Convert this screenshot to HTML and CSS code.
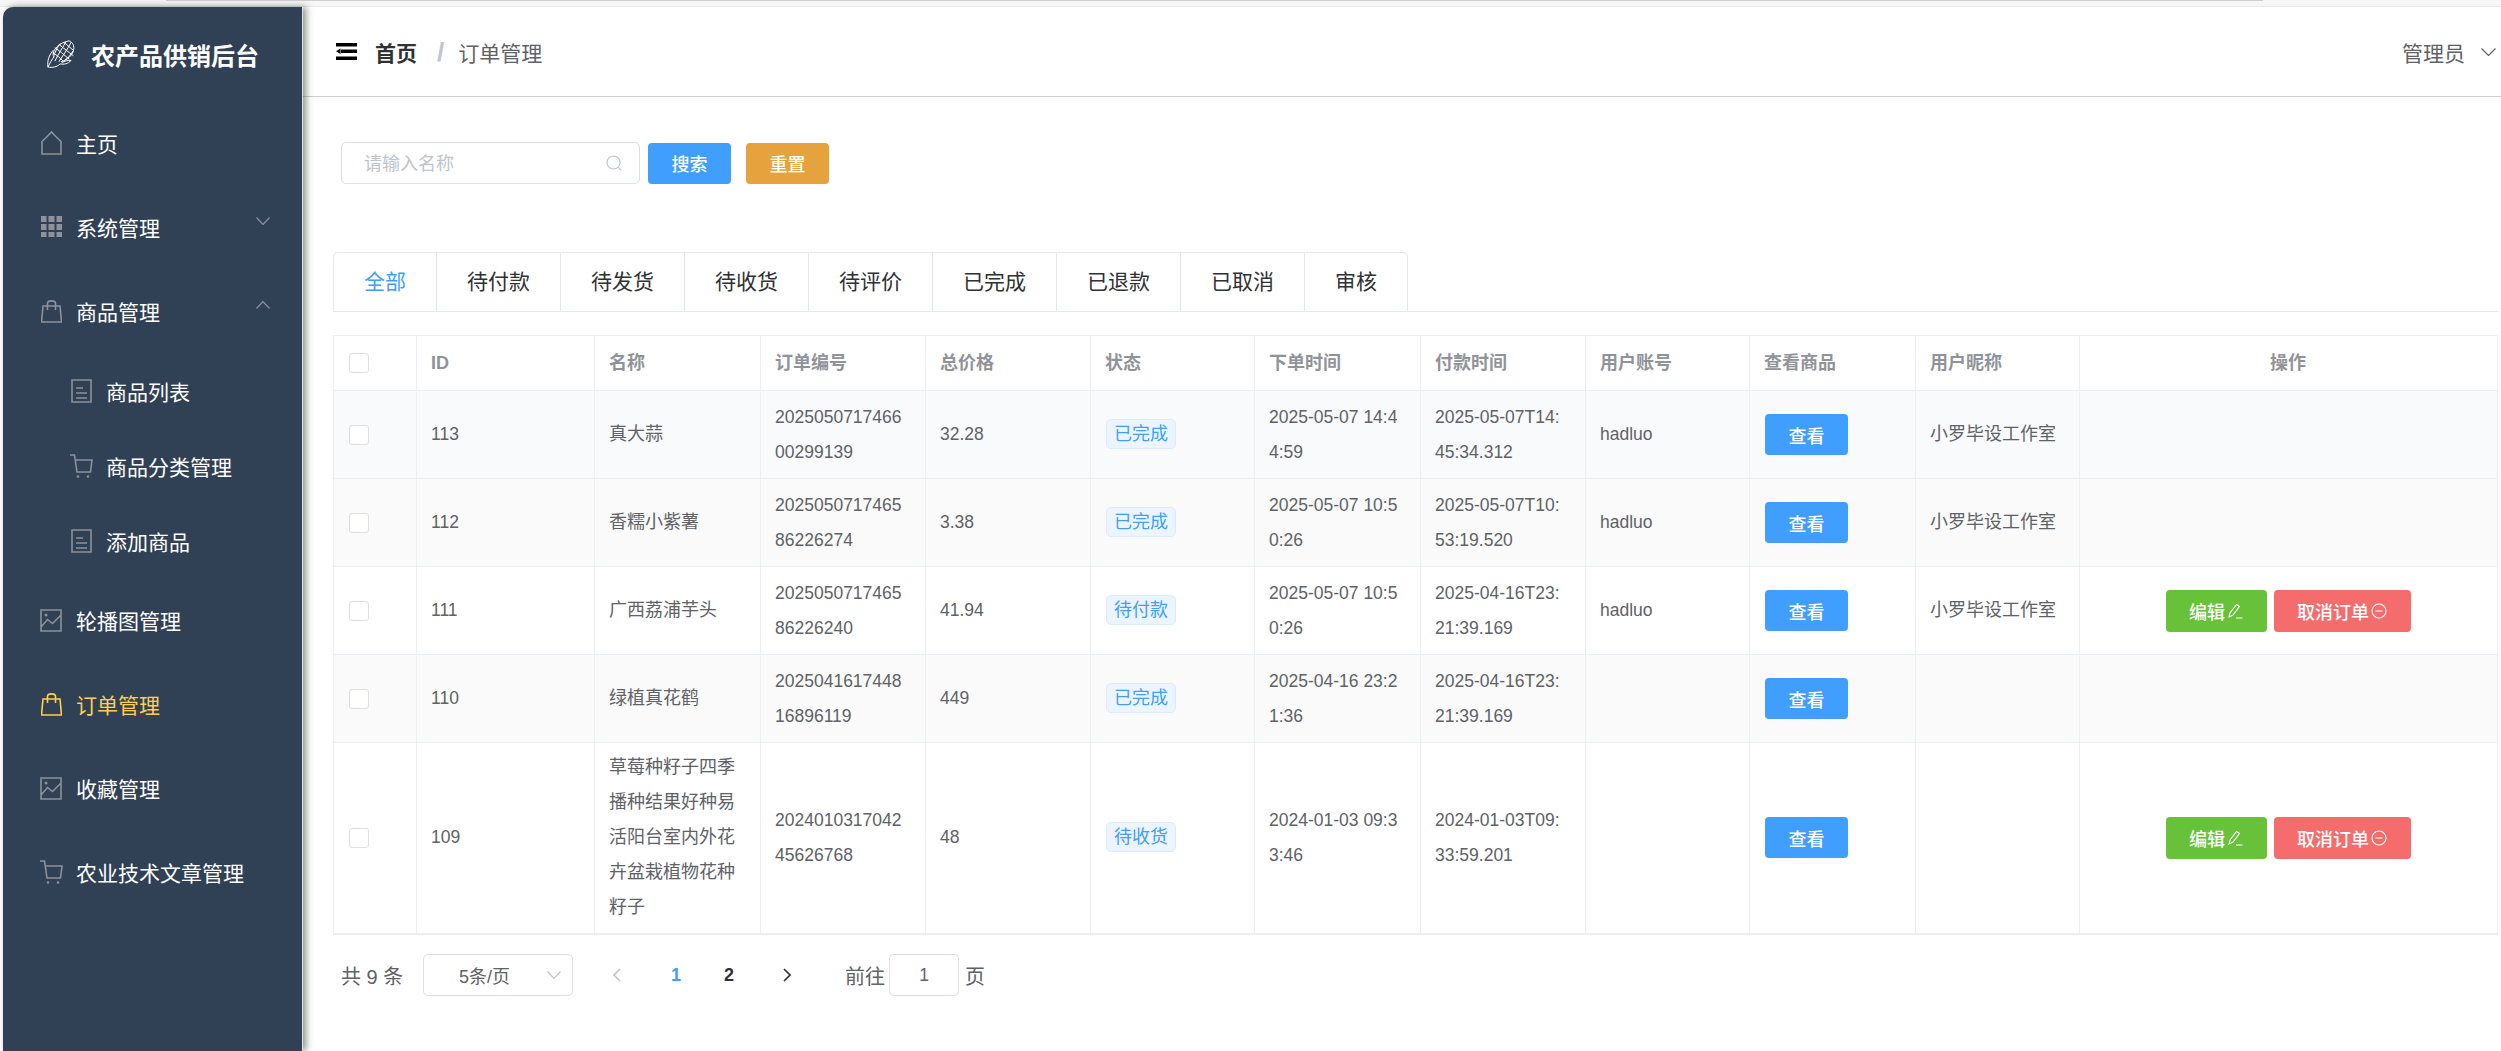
FILE: index.html
```html
<!DOCTYPE html>
<html lang="zh-CN">
<head>
<meta charset="utf-8">
<title>农产品供销后台</title>
<link rel="stylesheet" href="styles.css">
</head>
<body>
<div class="topstrip"><div class="topline"></div></div>
<div class="app">
  <aside class="sidebar">
    <div class="brand">
      <svg class="brand-icon" viewBox="0 0 28 28" fill="none" stroke="#fff" stroke-width="1" stroke-linecap="round" stroke-linejoin="round">
        <path d="M6 15C6 9 12 3 22 .8c4 1.700 5.500 5 4.500 9.700-1.500 5-6 9.500-12 11"/>
        <path d="M8 8c4 2 9 7 14 11M12 4.500c4 3 10 8 14 11M17 2.500c3 2 6 5 9.500 8M6 13c4 2 7 5 10 8"/>
        <path d="M19 1.800c-3 5-7 11-11 19M24 2.500c-3 6-8 13-12 19M13 4C10 8 8 12 6.500 17M26 11c-2 4-5 7-8 9"/>
        <path d="M6 10.500C2 15 0 21 1 27c4 1 9 0 12-3 4 .5 8 0 11-3.500-3-.5-6 .5-9 2M1 27c2-4 4-8 6-10"/>
      </svg>
      <span class="brand-name">农产品供销后台</span>
    </div>
    <nav class="menu">
      <a class="item">
        <svg class="ico" viewBox="0 0 21 24"><path d="M1 23V10.500C4 7.500 7.500 4.500 10.500 1 13.500 4.500 17 7.500 20 10.500V23Z"/></svg>
        <span>主页</span>
      </a>
      <a class="item">
        <svg class="ico" viewBox="0 0 21 24"><g class="solid"><rect x="0" y="1" width="5.500" height="6"/><rect x="7.500" y="1" width="6" height="6"/><rect x="15.500" y="1" width="5.500" height="6"/><rect x="0" y="9" width="5.500" height="6"/><rect x="7.500" y="9" width="6" height="6"/><rect x="15.500" y="9" width="5.500" height="6"/><rect x="0" y="17" width="5.500" height="5"/><rect x="7.500" y="17" width="6" height="5"/><rect x="15.500" y="17" width="5.500" height="5"/></g></svg>
        <span>系统管理</span>
        <svg class="caret" viewBox="0 0 14 8"><path d="M.5.500 7 7.500 13.500.500"/></svg>
      </a>
      <a class="item">
        <svg class="ico" viewBox="0 0 21 24"><path d="M2 7H19L20.500 23H.500ZM6.500 11V4.500C6.500 1 14.500 1 14.500 4.500V11"/></svg>
        <span>商品管理</span>
        <svg class="caret" viewBox="0 0 14 8"><path d="M.5 7.500 7 .5 13.500 7.500"/></svg>
      </a>
      <a class="item sub">
        <svg class="ico" viewBox="0 0 21 24"><path d="M1 1H20V23H1ZM5 9H12M5 14H16M5 19H16"/></svg>
        <span>商品列表</span>
      </a>
      <a class="item sub">
        <svg class="ico cart" viewBox="0 0 23 24"><path d="M0 1H4.500L7 18H20.500L22 6H5"/><circle class="solid" cx="8" cy="22.500" r="1.300"/><circle class="solid" cx="18" cy="22.500" r="1.300"/></svg>
        <span>商品分类管理</span>
      </a>
      <a class="item sub">
        <svg class="ico" viewBox="0 0 21 24"><path d="M1 1H20V23H1ZM5 9H12M5 14H16M5 19H16"/></svg>
        <span>添加商品</span>
      </a>
      <a class="item">
        <svg class="ico wide" viewBox="0 0 22 24"><path d="M1 2H21V23H1ZM1 19 7.500 11.500 12.500 15.500 21 7"/><circle class="solid" cx="6" cy="7" r="1.500"/></svg>
        <span>轮播图管理</span>
      </a>
      <a class="item active">
        <svg class="ico" viewBox="0 0 21 24"><path d="M2 7H19L20.500 23H.500ZM6.500 11V4.500C6.500 1 14.500 1 14.500 4.500V11"/></svg>
        <span>订单管理</span>
      </a>
      <a class="item">
        <svg class="ico wide" viewBox="0 0 22 24"><path d="M1 2H21V23H1ZM1 19 7.500 11.500 12.500 15.500 21 7"/><circle class="solid" cx="6" cy="7" r="1.500"/></svg>
        <span>收藏管理</span>
      </a>
      <a class="item">
        <svg class="ico cart" viewBox="0 0 23 24"><path d="M0 1H4.500L7 18H20.500L22 6H5"/><circle class="solid" cx="8" cy="22.500" r="1.300"/><circle class="solid" cx="18" cy="22.500" r="1.300"/></svg>
        <span>农业技术文章管理</span>
      </a>
    </nav>
  </aside>

  <main class="main">
    <header class="topbar">
      <svg class="burger" viewBox="0 0 21 17"><path d="M0 0H21V3.500H0ZM0 13.500H21V17H0ZM5 6.500H21V10H5ZM0 8.250 4.500 5.500V11Z"/></svg>
      <span class="crumb-home">首页</span>
      <span class="crumb-sep">/</span>
      <span class="crumb-now">订单管理</span>
      <div class="user">
        <span>管理员</span>
        <svg class="user-caret" viewBox="0 0 15 8"><path d="M.5.500 7.500 7.500 14.500.500"/></svg>
      </div>
    </header>

    <section class="content">
      <div class="search">
        <div class="field">
          <span class="placeholder">请输入名称</span>
          <svg class="field-icon" viewBox="0 0 16 16"><circle cx="7.500" cy="7.500" r="6.500"/><path d="M12.500 12.500 15 15"/></svg>
        </div>
        <button class="btn primary search-btn">搜索</button>
        <button class="btn warning search-btn">重置</button>
      </div>

      <div class="tabs">
        <div class="tab-group">
          <div class="tab on">全部</div>
          <div class="tab">待付款</div>
          <div class="tab">待发货</div>
          <div class="tab">待收货</div>
          <div class="tab">待评价</div>
          <div class="tab">已完成</div>
          <div class="tab">已退款</div>
          <div class="tab">已取消</div>
          <div class="tab">审核</div>
        </div>
      </div>

      <table class="grid">
        <thead>
          <tr>
            <th><span class="check"></span></th>
            <th>ID</th><th>名称</th><th>订单编号</th><th>总价格</th><th>状态</th><th>下单时间</th><th>付款时间</th><th>用户账号</th><th>查看商品</th><th>用户昵称</th><th class="center">操作</th>
          </tr>
        </thead>
        <tbody>
          <tr class="tint-a">
            <td><span class="check"></span></td><td>113</td><td class="zh">真大蒜</td><td>2025050717466<br>00299139</td><td>32.28</td>
            <td><span class="tag">已完成</span></td><td>2025-05-07 14:4<br>4:59</td><td>2025-05-07T14:<br>45:34.312</td><td>hadluo</td>
            <td><button class="btn primary view">查看</button></td><td class="zh">小罗毕设工作室</td><td class="center"></td>
          </tr>
          <tr class="tint-b">
            <td><span class="check"></span></td><td>112</td><td class="zh">香糯小紫薯</td><td>2025050717465<br>86226274</td><td>3.38</td>
            <td><span class="tag">已完成</span></td><td>2025-05-07 10:5<br>0:26</td><td>2025-05-07T10:<br>53:19.520</td><td>hadluo</td>
            <td><button class="btn primary view">查看</button></td><td class="zh">小罗毕设工作室</td><td class="center"></td>
          </tr>
          <tr>
            <td><span class="check"></span></td><td>111</td><td class="zh">广西荔浦芋头</td><td>2025050717465<br>86226240</td><td>41.94</td>
            <td><span class="tag">待付款</span></td><td>2025-05-07 10:5<br>0:26</td><td>2025-04-16T23:<br>21:39.169</td><td>hadluo</td>
            <td><button class="btn primary view">查看</button></td><td class="zh">小罗毕设工作室</td>
            <td class="center"><div class="ops">
              <button class="btn success edit">编辑<svg class="btn-ico" viewBox="0 0 16 16"><path d="M2 14 3 10 9.500 1.500 12.500 3.500 6 12ZM9 15H15.500"/></svg></button>
              <button class="btn danger cancel">取消订单<svg class="btn-ico" viewBox="0 0 16 16"><circle cx="8" cy="8" r="7"/><path d="M4.500 8H11.500"/></svg></button>
            </div></td>
          </tr>
          <tr class="tint-b">
            <td><span class="check"></span></td><td>110</td><td class="zh">绿植真花鹤</td><td>2025041617448<br>16896119</td><td>449</td>
            <td><span class="tag">已完成</span></td><td>2025-04-16 23:2<br>1:36</td><td>2025-04-16T23:<br>21:39.169</td><td></td>
            <td><button class="btn primary view">查看</button></td><td></td><td class="center"></td>
          </tr>
          <tr>
            <td><span class="check"></span></td><td>109</td><td class="zh">草莓种籽子四季<br>播种结果好种易<br>活阳台室内外花<br>卉盆栽植物花种<br>籽子</td><td>2024010317042<br>45626768</td><td>48</td>
            <td><span class="tag">待收货</span></td><td>2024-01-03 09:3<br>3:46</td><td>2024-01-03T09:<br>33:59.201</td><td></td>
            <td><button class="btn primary view">查看</button></td><td></td>
            <td class="center"><div class="ops">
              <button class="btn success edit">编辑<svg class="btn-ico" viewBox="0 0 16 16"><path d="M2 14 3 10 9.500 1.500 12.500 3.500 6 12ZM9 15H15.500"/></svg></button>
              <button class="btn danger cancel">取消订单<svg class="btn-ico" viewBox="0 0 16 16"><circle cx="8" cy="8" r="7"/><path d="M4.500 8H11.500"/></svg></button>
            </div></td>
          </tr>
        </tbody>
      </table>

      <div class="pager">
        <span class="total">共 9 条</span>
        <div class="size">
          <span>5条/页</span>
          <svg class="size-caret" viewBox="0 0 14 8"><path d="M.5.500 7 7.500 13.500.500"/></svg>
        </div>
        <svg class="nav prev" viewBox="0 0 8 14"><path d="M7 1 1 7 7 13"/></svg>
        <span class="page on">1</span>
        <span class="page">2</span>
        <svg class="nav next" viewBox="0 0 8 14"><path d="M1 1 7 7 1 13"/></svg>
        <span class="goto">前往</span>
        <div class="jump">1</div>
        <span class="goto-end">页</span>
      </div>
    </section>
  </main>
</div>
</body>
</html>
```
FILE: styles.css
```css
* { box-sizing: border-box; }
html, body { margin: 0; padding: 0; }
body {
  width: 2501px;
  height: 1051px;
  overflow: hidden;
  background: #fff;
  font-family: "Liberation Sans", "Noto Sans CJK SC", sans-serif;
  color: #606266;
}
svg { display: block; flex: none; }

.topstrip { height: 7px; background: #f6f6f6; border-bottom: 1px solid #e8e8e8; padding-left: 166px; }
.topline { width: 2097px; height: 1px; background: #cfcfcf; }

.app { display: flex; height: 1044px; }

/* sidebar */
.sidebar {
  width: 300px;
  margin-left: 3px;
  flex: none;
  background: #304156;
  border-right: 1px solid #dfe3e6;
  border-top-left-radius: 10px;
  box-shadow: 3px 0 7px rgba(40, 55, 40, .55);
  position: relative;
  z-index: 2;
}
.brand { height: 94px; display: flex; align-items: center; padding-left: 44px; }
.brand-icon { width: 28px; height: 28px; margin-right: 16px; }
.brand-name { font-size: 24px; font-weight: 700; color: #fff; white-space: nowrap; }

.menu { display: block; }
.item {
  height: 84px;
  display: flex;
  align-items: center;
  padding: 0 32px 0 38px;
  color: #fff;
  font-size: 21px;
}
.item > span { white-space: nowrap; }
.ico { width: 21px; height: 24px; margin-right: 14px; fill: none; stroke: #8d9199; stroke-width: 1.6; }
.ico .solid { fill: #8d9199; stroke: none; }
.item .solid { fill: #8d9199; stroke: none; }
.ico.cart { width: 23px; margin-left: -1px; margin-right: 13px; }
.ico.wide { width: 22px; margin-left: -1px; margin-right: 14px; }
.caret { width: 14px; height: 8px; margin-left: auto; margin-bottom: 12px; fill: none; stroke: #8d9199; stroke-width: 1.2; }
.sub { height: 75px; padding-left: 68px; }
.item.active { color: #ffd04b; }
.item.active .ico { stroke: #ffd04b; }

/* main */
.main { flex: 1; min-width: 0; }
.topbar {
  height: 90px;
  display: flex;
  align-items: center;
  border-bottom: 1px solid #cfcfcf;
  padding: 0 5px 0 33px;
  font-size: 21px;
}
.burger { width: 21px; height: 17px; margin-right: 18px; fill: #000; }
.crumb-home { font-weight: 700; color: #303133; }
.crumb-sep { color: #c0c4cc; margin: 0 14px 0 20px; font-size: 26px; font-weight: 700; line-height: 1; }
.crumb-now { color: #606266; }
.user { margin-left: auto; display: flex; align-items: center; }
.user > span { margin-right: 1px; }
.user-caret { width: 15px; height: 8px; margin-left: 15px; fill: none; stroke: #606266; stroke-width: 1.2; }

.content { padding: 45px 3px 0 30px; }

.search { display: flex; align-items: center; height: 42px; padding-left: 8px; }
.field {
  width: 299px;
  height: 42px;
  margin-right: 8px;
  display: flex;
  align-items: center;
  padding: 0 17px 0 22px;
  border: 1px solid #dcdfe6;
  border-radius: 5px;
  font-size: 18px;
  color: #c0c4cc;
}
.placeholder { margin-top: -2px; }
.field-icon { width: 16px; height: 16px; margin-left: auto; fill: none; stroke: #c0c4cc; stroke-width: 1.2; }

.btn {
  border: 0;
  border-radius: 4px;
  color: #fff;
  font-family: inherit;
  font-size: 18px;
  font-weight: 500;
  padding: 0;
  display: inline-flex;
  align-items: center;
  justify-content: center;
}
.primary { background: #409eff; }
.warning { background: #e6a23c; }
.success { background: #67c23a; }
.danger { background: #f56c6c; }
.search-btn { width: 83px; height: 41px; margin-right: 15px; }
.view { width: 83px; height: 41px; }

/* tabs */
.tabs { margin-top: 68px; height: 60px; border-bottom: 1px solid #e4e7ed; }
.tab-group {
  display: inline-flex;
  height: 60px;
  border: 1px solid #e4e7ed;
  border-radius: 5px 5px 0 0;
}
.tab {
  height: 58px;
  padding: 0 30px;
  line-height: 58px;
  font-size: 21px;
  color: #303133;
  border-right: 1px solid #e4e7ed;
}
.tab:last-child { border-right: 0; }
.tab.on { color: #409eff; }

/* table */
.grid {
  margin-top: 23px;
  width: 2165px;
  table-layout: fixed;
  border-collapse: separate;
  border-spacing: 0;
  border-top: 1px solid #ebeef5;
  border-left: 1px solid #ebeef5;
  border-bottom: 2px solid #ebeef5;
  font-size: 17.5px;
  line-height: 35px;
}
.grid th, .grid td {
  height: 88px;
  padding: 8px 15px 8px 14px;
  text-align: left;
  vertical-align: middle;
  border-right: 1px solid #ebeef5;
  border-bottom: 1px solid #ebeef5;
  white-space: nowrap;
}
.grid th { height: 55px; color: #909399; font-weight: 700; font-size: 18px; }
.grid td.zh, .tag { font-size: 18px; }
.grid tbody tr:last-child td { border-bottom: 0; height: 190px; padding-top: 7px; padding-bottom: 8px; }
.grid th:nth-child(1) { width: 83px; }
.grid th:nth-child(2) { width: 178px; }
.grid th:nth-child(3) { width: 166px; }
.grid th:nth-child(4) { width: 165px; }
.grid th:nth-child(5) { width: 165px; }
.grid th:nth-child(6) { width: 164px; }
.grid th:nth-child(7) { width: 166px; }
.grid th:nth-child(8) { width: 165px; }
.grid th:nth-child(9) { width: 164px; }
.grid th:nth-child(10) { width: 166px; }
.grid th:nth-child(11) { width: 164px; }
.grid .center { text-align: center; }
.tint-a td { background: #f9fafc; }
.tint-b td { background: #fafafa; }

.check {
  display: block;
  width: 20px;
  height: 20px;
  margin-left: 1px;
  background: #fff;
  border: 1px solid #dcdfe6;
  border-radius: 3px;
}
.tag {
  display: inline-block;
  width: 70px;
  height: 30px;
  margin-left: 1px;
  line-height: 28px;
  text-align: center;
  color: #409eff;
  background: #ecf5ff;
  border: 1px solid #d9ecff;
  border-radius: 5px;
}
.view { margin-left: 1px; }
.ops { display: flex; justify-content: center; gap: 7px; }
.edit { width: 101px; height: 42px; }
.cancel { width: 137px; height: 42px; }
.btn-ico { width: 16px; height: 16px; margin-left: 2px; fill: none; stroke: #fff; stroke-width: 1.1; }

/* pager */
.pager { display: flex; align-items: center; height: 42px; margin-top: 19px; padding-left: 8px; font-size: 20px; }
.total { width: 82px; white-space: nowrap; }
.size {
  width: 150px;
  height: 42px;
  display: flex;
  align-items: center;
  padding: 0 11px 0 35px;
  border: 1px solid #dcdfe6;
  border-radius: 5px;
  font-size: 18px;
}
.size-caret { width: 14px; height: 8px; margin-left: auto; fill: none; stroke: #c0c4cc; stroke-width: 1.2; }
.nav { width: 8px; height: 14px; fill: none; stroke-width: 1.6; }
.prev { margin-left: 40px; stroke: #c0c4cc; }
.next { margin-left: 49px; stroke: #303133; }
.page { width: 10px; font-size: 18px; font-weight: 700; color: #303133; margin-left: 43px; }
.page.on { color: #409eff; margin-left: 50px; }
.goto { margin-left: 54px; }
.jump {
  width: 70px;
  height: 42px;
  margin: 0 6px 0 4px;
  line-height: 40px;
  text-align: center;
  font-size: 17.5px;
  border: 1px solid #dcdfe6;
  border-radius: 5px;
}
```
